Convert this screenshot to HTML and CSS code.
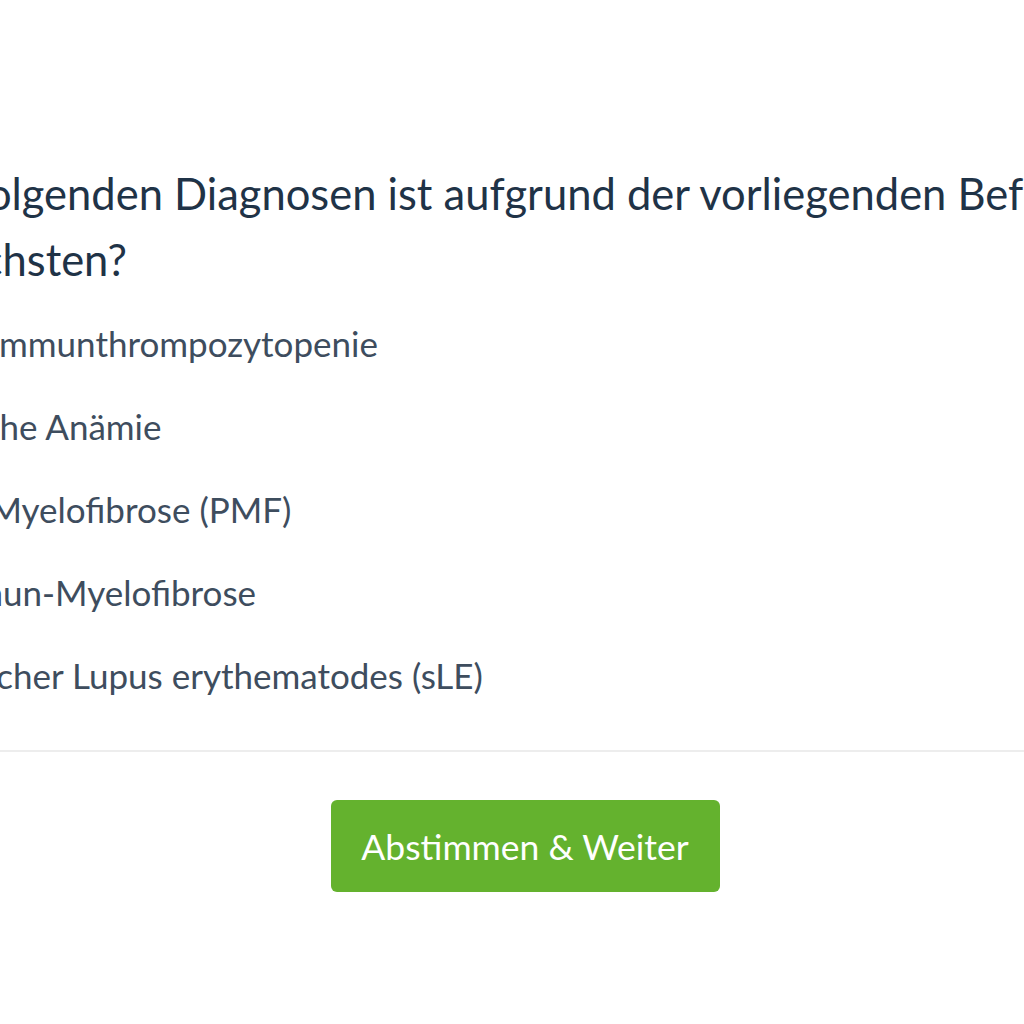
FILE: index.html
```html
<!DOCTYPE html>
<html lang="de">
<head>
    <meta charset="UTF-8">
    <meta name="viewport" content="width=device-width, initial-scale=1.0">
    <title>Fallquiz - Abstimmung</title>
    <link rel="stylesheet" href="styles.css">
</head>
<body>
    <div class="stage">
        <div class="question">
            <h2 class="question-title">Welche der folgenden Diagnosen ist aufgrund der vorliegenden Befunde am<br>wahrscheinlichsten?</h2>
            <ul class="answers">
                <li>Primäre Immunthrompozytopenie</li>
                <li>Aplastische Anämie</li>
                <li>Primäre Myelofibrose (PMF)</li>
                <li>Autoimmun-Myelofibrose</li>
                <li>Systemischer Lupus erythematodes (sLE)</li>
            </ul>
        </div>

        <hr class="divider">

        <div class="actions">
            <button class="vote-btn">Abstimmen &amp; Weiter</button>
        </div>
    </div>
</body>
</html>
```

FILE: styles.css
```css
html, body {
    margin: 0;
    padding: 0;
    background: #fff;
    overflow: hidden;
}
body {
    font-family: Lato, "Noto Sans", sans-serif;
    color: #2d3e50;
}
.stage {
    width: 1024px;
    height: 1024px;
    padding-top: 160px;
    box-sizing: border-box;
    overflow: hidden;
}
.question {
    margin-left: -256px;
}
.question-title {
    margin: 0;
    font-size: 43.5px;
    font-weight: 400;
    line-height: 66px;
    color: #1f3347;
    white-space: nowrap;
}
/* Antworten stehen etwas weiter eingerückt als die Frage */
.answers {
    list-style: none;
    margin: 10px 0 0;
    padding: 0 0 0 118px;
}
.answers li {
    font-size: 35px;
    line-height: 83px;
    color: #3e4d5e;
    white-space: nowrap;
}
.divider {
    border: none;
    border-top: 2px solid #ededed;
    margin: 33px 0 0;
}
.actions {
    display: flex;
    justify-content: center;
    padding-top: 48px;
    padding-left: 26px;
}
.vote-btn {
    width: 389px;
    height: 92px;
    background: #64b22e;
    color: #fff;
    border: none;
    border-radius: 6px;
    font-family: inherit;
    font-size: 35.5px;
    cursor: pointer;
}
.vote-btn:hover {
    background: #57a025;
}
```
